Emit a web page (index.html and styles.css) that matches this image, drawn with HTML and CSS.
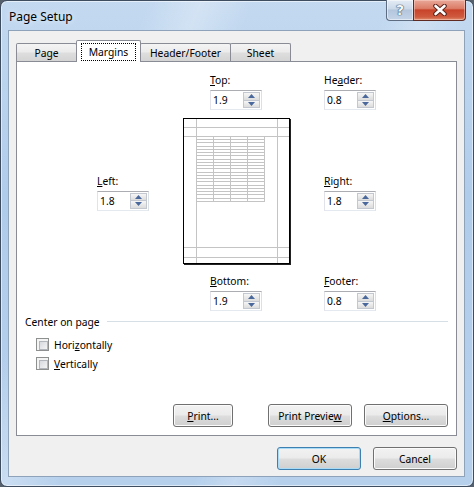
FILE: index.html
```html
<!DOCTYPE html>
<html>
<head>
<meta charset="utf-8">
<title>Page Setup</title>
<link rel="stylesheet" href="styles.css">
</head>
<body>
<div class="window">
  <div class="titlebar">
    <div class="title">Page Setup</div>
    <div class="caption-btns">
      <div class="cap-btn help"><span class="q">?</span></div>
      <div class="cap-btn close">
        <svg width="16" height="12" viewBox="0 0 16 12">
          <path d="M3.5 2 L12.5 10 M12.5 2 L3.5 10" stroke="#5b231a" stroke-width="4.6" stroke-linecap="round" fill="none"/>
          <path d="M3.5 2 L12.5 10 M12.5 2 L3.5 10" stroke="#ffffff" stroke-width="2.6" stroke-linecap="round" fill="none"/>
        </svg>
      </div>
    </div>
  </div>
  <div class="client">
    <div class="tabs">
      <div class="tab t-page">Page</div>
      <div class="tab t-margins sel"><span class="focus">Margins</span></div>
      <div class="tab t-hf">Header/Footer</div>
      <div class="tab t-sheet">Sheet</div>
    </div>
    <div class="panel">
      <div class="mgrid">
        <div class="field f-top">
          <div class="lbl"><u>T</u>op:</div>
          <div class="spin"><span class="val">1.9</span><span class="sbtns"><span class="sb"><svg width="7" height="4" viewBox="0 0 7 4"><polygon points="0,4 3.5,0 7,4" fill="#4a689c"/></svg></span><span class="sb"><svg width="7" height="4" viewBox="0 0 7 4"><polygon points="0,0 7,0 3.5,4" fill="#4a689c"/></svg></span></span></div>
        </div>
        <div class="field f-header">
          <div class="lbl">He<u>a</u>der:</div>
          <div class="spin"><span class="val">0.8</span><span class="sbtns"><span class="sb"><svg width="7" height="4" viewBox="0 0 7 4"><polygon points="0,4 3.5,0 7,4" fill="#4a689c"/></svg></span><span class="sb"><svg width="7" height="4" viewBox="0 0 7 4"><polygon points="0,0 7,0 3.5,4" fill="#4a689c"/></svg></span></span></div>
        </div>
        <div class="field f-left">
          <div class="lbl"><u>L</u>eft:</div>
          <div class="spin"><span class="val">1.8</span><span class="sbtns"><span class="sb"><svg width="7" height="4" viewBox="0 0 7 4"><polygon points="0,4 3.5,0 7,4" fill="#4a689c"/></svg></span><span class="sb"><svg width="7" height="4" viewBox="0 0 7 4"><polygon points="0,0 7,0 3.5,4" fill="#4a689c"/></svg></span></span></div>
        </div>
        <div class="preview">
          <svg width="108" height="147" viewBox="0 0 108 147" shape-rendering="crispEdges">
            <rect x="0" y="0" width="108" height="147" fill="#ffffff"/>
            <g stroke="#c4c4c4" stroke-width="1">
              <line x1="13.5" y1="1" x2="13.5" y2="145"/>
              <line x1="94.5" y1="1" x2="94.5" y2="145"/>
              <line x1="1" y1="9.5" x2="106" y2="9.5"/>
              <line x1="1" y1="18.5" x2="106" y2="18.5"/>
              <line x1="1" y1="129.5" x2="106" y2="129.5"/>
              <line x1="1" y1="139.5" x2="106" y2="139.5"/>
              <line x1="30.5" y1="18.5" x2="30.5" y2="83.5"/>
              <line x1="47.5" y1="18.5" x2="47.5" y2="83.5"/>
              <line x1="64.5" y1="18.5" x2="64.5" y2="83.5"/>
              <line x1="81.5" y1="18.5" x2="81.5" y2="83.5"/>
              <line x1="13.5" y1="21.5" x2="81.5" y2="21.5"/>
              <line x1="13.5" y1="24.5" x2="81.5" y2="24.5"/>
              <line x1="13.5" y1="28.5" x2="81.5" y2="28.5"/>
              <line x1="13.5" y1="31.5" x2="81.5" y2="31.5"/>
              <line x1="13.5" y1="34.5" x2="81.5" y2="34.5"/>
              <line x1="13.5" y1="37.5" x2="81.5" y2="37.5"/>
              <line x1="13.5" y1="41.5" x2="81.5" y2="41.5"/>
              <line x1="13.5" y1="44.5" x2="81.5" y2="44.5"/>
              <line x1="13.5" y1="47.5" x2="81.5" y2="47.5"/>
              <line x1="13.5" y1="50.5" x2="81.5" y2="50.5"/>
              <line x1="13.5" y1="54.5" x2="81.5" y2="54.5"/>
              <line x1="13.5" y1="57.5" x2="81.5" y2="57.5"/>
              <line x1="13.5" y1="60.5" x2="81.5" y2="60.5"/>
              <line x1="13.5" y1="63.5" x2="81.5" y2="63.5"/>
              <line x1="13.5" y1="67.5" x2="81.5" y2="67.5"/>
              <line x1="13.5" y1="70.5" x2="81.5" y2="70.5"/>
              <line x1="13.5" y1="73.5" x2="81.5" y2="73.5"/>
              <line x1="13.5" y1="76.5" x2="81.5" y2="76.5"/>
              <line x1="13.5" y1="80.5" x2="81.5" y2="80.5"/>
              <line x1="13.5" y1="83.5" x2="81.5" y2="83.5"/>
            </g>
            <rect x="0.5" y="0.5" width="106" height="145" fill="none" stroke="#000000" stroke-width="1"/>
            <line x1="107.5" y1="1" x2="107.5" y2="147" stroke="#222222" stroke-width="1"/>
            <line x1="1" y1="146.5" x2="108" y2="146.5" stroke="#222222" stroke-width="1"/>
          </svg>
        </div>
        <div class="field f-right">
          <div class="lbl"><u>R</u>ight:</div>
          <div class="spin"><span class="val">1.8</span><span class="sbtns"><span class="sb"><svg width="7" height="4" viewBox="0 0 7 4"><polygon points="0,4 3.5,0 7,4" fill="#4a689c"/></svg></span><span class="sb"><svg width="7" height="4" viewBox="0 0 7 4"><polygon points="0,0 7,0 3.5,4" fill="#4a689c"/></svg></span></span></div>
        </div>
        <div class="field f-bottom">
          <div class="lbl"><u>B</u>ottom:</div>
          <div class="spin"><span class="val">1.9</span><span class="sbtns"><span class="sb"><svg width="7" height="4" viewBox="0 0 7 4"><polygon points="0,4 3.5,0 7,4" fill="#4a689c"/></svg></span><span class="sb"><svg width="7" height="4" viewBox="0 0 7 4"><polygon points="0,0 7,0 3.5,4" fill="#4a689c"/></svg></span></span></div>
        </div>
        <div class="field f-footer">
          <div class="lbl"><u>F</u>ooter:</div>
          <div class="spin"><span class="val">0.8</span><span class="sbtns"><span class="sb"><svg width="7" height="4" viewBox="0 0 7 4"><polygon points="0,4 3.5,0 7,4" fill="#4a689c"/></svg></span><span class="sb"><svg width="7" height="4" viewBox="0 0 7 4"><polygon points="0,0 7,0 3.5,4" fill="#4a689c"/></svg></span></span></div>
        </div>
      </div>

      <div class="group">
        <div class="group-head"><span class="group-title">Center on page</span><span class="group-line"></span></div>
        <div class="checks">
          <div class="check"><span class="cb"></span><span>Hori<u>z</u>ontally</span></div>
          <div class="check"><span class="cb"></span><span><u>V</u>ertically</span></div>
        </div>
      </div>

      <div class="panel-buttons">
        <div class="btn b-print"><span><u>P</u>rint...</span></div>
        <div class="btn b-preview"><span>Print Previe<u>w</u></span></div>
        <div class="btn b-options"><span><u>O</u>ptions...</span></div>
      </div>
    </div>
    <div class="dialog-buttons">
      <div class="btn default"><span>OK</span></div>
      <div class="btn"><span>Cancel</span></div>
    </div>
  </div>
</div>
</body>
</html>
```

FILE: styles.css
```css
* { box-sizing: border-box; }
html, body { margin: 0; padding: 0; }
body {
  width: 474px;
  height: 487px;
  overflow: hidden;
  background: #56606d;
  font-family: "Noto Sans", "Open Sans", sans-serif;
  font-size: 10.3px;
  color: #000;
}
u { text-decoration: underline; text-underline-offset: 1px; text-decoration-thickness: 1px; }

.window {
  width: 474px;
  height: 487px;
  border: 1px solid #3e4d5f;
  border-radius: 7px;
  display: flex;
  flex-direction: column;
  background:
    linear-gradient(112deg, rgba(255,255,255,0) 22%, rgba(255,255,255,0.28) 30%, rgba(255,255,255,0) 38%, rgba(255,255,255,0) 58%, rgba(255,255,255,0.22) 64%, rgba(255,255,255,0) 71%),
    linear-gradient(180deg, #c3d9f0 0%, #b0cceb 40%, #b6d0ec 100%);
  box-shadow: inset 0 0 0 1px rgba(255,255,255,0.55);
}

.titlebar {
  height: 29px;
  display: flex;
  justify-content: space-between;
  align-items: flex-start;
  padding-left: 8px;
  padding-right: 7px;
}
.title {
  padding-top: 8px;
  line-height: 16px;
  font-size: 12px;
  color: #000;
  text-shadow: 0 0 6px rgba(255,255,255,0.9);
}
.caption-btns {
  display: flex;
  margin-top: -1px;
}
.cap-btn {
  height: 21px;
  display: flex;
  align-items: center;
  justify-content: center;
  border: 1px solid #5d6c80;
  border-top: none;
}
.help {
  width: 27px;
  border-right: none;
  border-radius: 0 0 0 4px;
  background: linear-gradient(180deg, #e4ecf5 0%, #cad8e8 45%, #b3c6dc 50%, #c4d5e8 100%);
  box-shadow: inset 0 0 0 1px rgba(255,255,255,0.5);
}
.q {
  font-family: "DejaVu Sans", sans-serif;
  font-weight: bold;
  font-size: 14px;
  line-height: 14px;
  color: #f4f7fb;
  text-shadow: 0 0 1px #3f5068, 0 0 1px #3f5068, 0 0 1px #3f5068;
}
.close {
  width: 53px;
  border-color: #5e2a22;
  border-radius: 0 0 4px 0;
  background: linear-gradient(180deg, #e9a899 0%, #dc7d68 42%, #c8432a 50%, #cf5a3e 85%, #e08f6f 100%);
  box-shadow: inset 0 0 0 1px rgba(255,220,210,0.45);
}

.client {
  flex: 1;
  margin: 0 8px 9px 7px;
  border: 1px solid #8ea2b9;
  background: #f0f0f0;
  padding: 9px 7px 6px 7px;
  display: flex;
  flex-direction: column;
}

.tabs {
  display: flex;
  align-items: flex-end;
  height: 22px;
  margin-bottom: -1px;
}
.tab {
  height: 18px;
  margin-bottom: 1px;
  border: 1px solid #898c95;
  border-bottom: none;
  border-radius: 2px 2px 0 0;
  background: linear-gradient(180deg, #f4f4f4 0%, #ebebeb 48%, #dedede 52%, #d4d4d4 100%);
  text-align: center;
  line-height: 16px;
  padding-top: 1px;
}
.tab + .tab { margin-left: -1px; }
.t-page { width: 61px; }
.t-margins { width: 65px; }
.t-hf { width: 91px; }
.t-sheet { width: 61px; }
.tab.sel {
  height: 22px;
  margin-bottom: 0;
  background: #fff;
  position: relative;
  z-index: 1;
  padding-top: 2px;
}
.focus {
  display: inline-block;
  border: 1px dotted #000;
  line-height: 16px;
  padding: 0 7px;
}

.panel {
  height: 375px;
  border: 1px solid #898c95;
  background: #fff;
  display: flex;
  flex-direction: column;
}

.mgrid {
  display: grid;
  grid-template-columns: 52px 34px 108px 33px 52px;
  grid-template-rows: auto 147px auto;
  row-gap: 8px;
  padding: 10px 0 0 80px;
}
.field { display: flex; flex-direction: column; }
.lbl { line-height: 16px; margin-bottom: 2px; }
.f-top { grid-column: 3; grid-row: 1; margin-left: 27px; }
.f-header { grid-column: 5; grid-row: 1; }
.f-left { grid-column: 1; grid-row: 2; align-self: center; }
.preview { grid-column: 3; grid-row: 2; }
.preview svg { display: block; }
.f-right { grid-column: 5; grid-row: 2; align-self: center; }
.f-bottom { grid-column: 3; grid-row: 3; margin-left: 27px; }
.f-footer { grid-column: 5; grid-row: 3; }

.spin {
  width: 52px;
  height: 20px;
  border: 1px solid;
  border-color: #abadb3 #dbdfe6 #e3e9ef #e2e3ea;
  background: #fff;
  display: flex;
  padding: 1px;
}
.val { flex: 1; line-height: 16px; padding-left: 1px; }
.sbtns {
  width: 17px;
  display: flex;
  flex-direction: column;
}
.sb {
  flex: 1;
  display: flex;
  align-items: center;
  justify-content: center;
  border: 1px solid #c3c7cf;
  background: linear-gradient(180deg, #f6f6f6 0%, #e9e9e9 50%, #dcdcdc 100%);
}
.sb + .sb { border-top: none; }
.sb svg { display: block; }

.group {
  margin-top: 3px;
  padding: 0 8px 0 8px;
}
.group-head {
  display: flex;
  align-items: center;
  line-height: 16px;
}
.group-line {
  flex: 1;
  margin-left: 7px;
  height: 2px;
  border-top: 1px solid #d5dfe5;
  border-bottom: 1px solid #ffffff;
}
.checks {
  margin-top: 5px;
  padding-left: 11px;
}
.check {
  height: 19px;
  display: flex;
  align-items: center;
  gap: 5px;
}
.cb {
  width: 13px;
  height: 13px;
  border: 1px solid #8e8f8f;
  padding: 2px;
  background: #f4f4f4;
}
.cb::before {
  content: "";
  display: block;
  width: 100%;
  height: 100%;
  border: 1px solid #b2b6bc;
  background: linear-gradient(135deg, #d6d9de 0%, #f4f4f4 100%);
}

.panel-buttons {
  margin-top: auto;
  display: flex;
  justify-content: flex-end;
  gap: 12px;
  padding: 0 8px 8px 0;
}
.btn {
  width: 84px;
  height: 23px;
  border: 1px solid #707070;
  border-radius: 3px;
  background: linear-gradient(180deg, #f2f2f2 0%, #ebebeb 48%, #dddddd 52%, #cfcfcf 100%);
  box-shadow: inset 0 0 0 1px #fbfbfb;
  display: flex;
  align-items: center;
  justify-content: center;
  line-height: 16px;
}
.b-print { width: 60px; margin-right: 23px; }
.btn.default {
  border-color: #3c7fb1;
  box-shadow: inset 0 0 0 1px #a9dbf6;
}
.dialog-buttons {
  margin-top: 11px;
  display: flex;
  justify-content: flex-end;
  gap: 12px;
}
```
